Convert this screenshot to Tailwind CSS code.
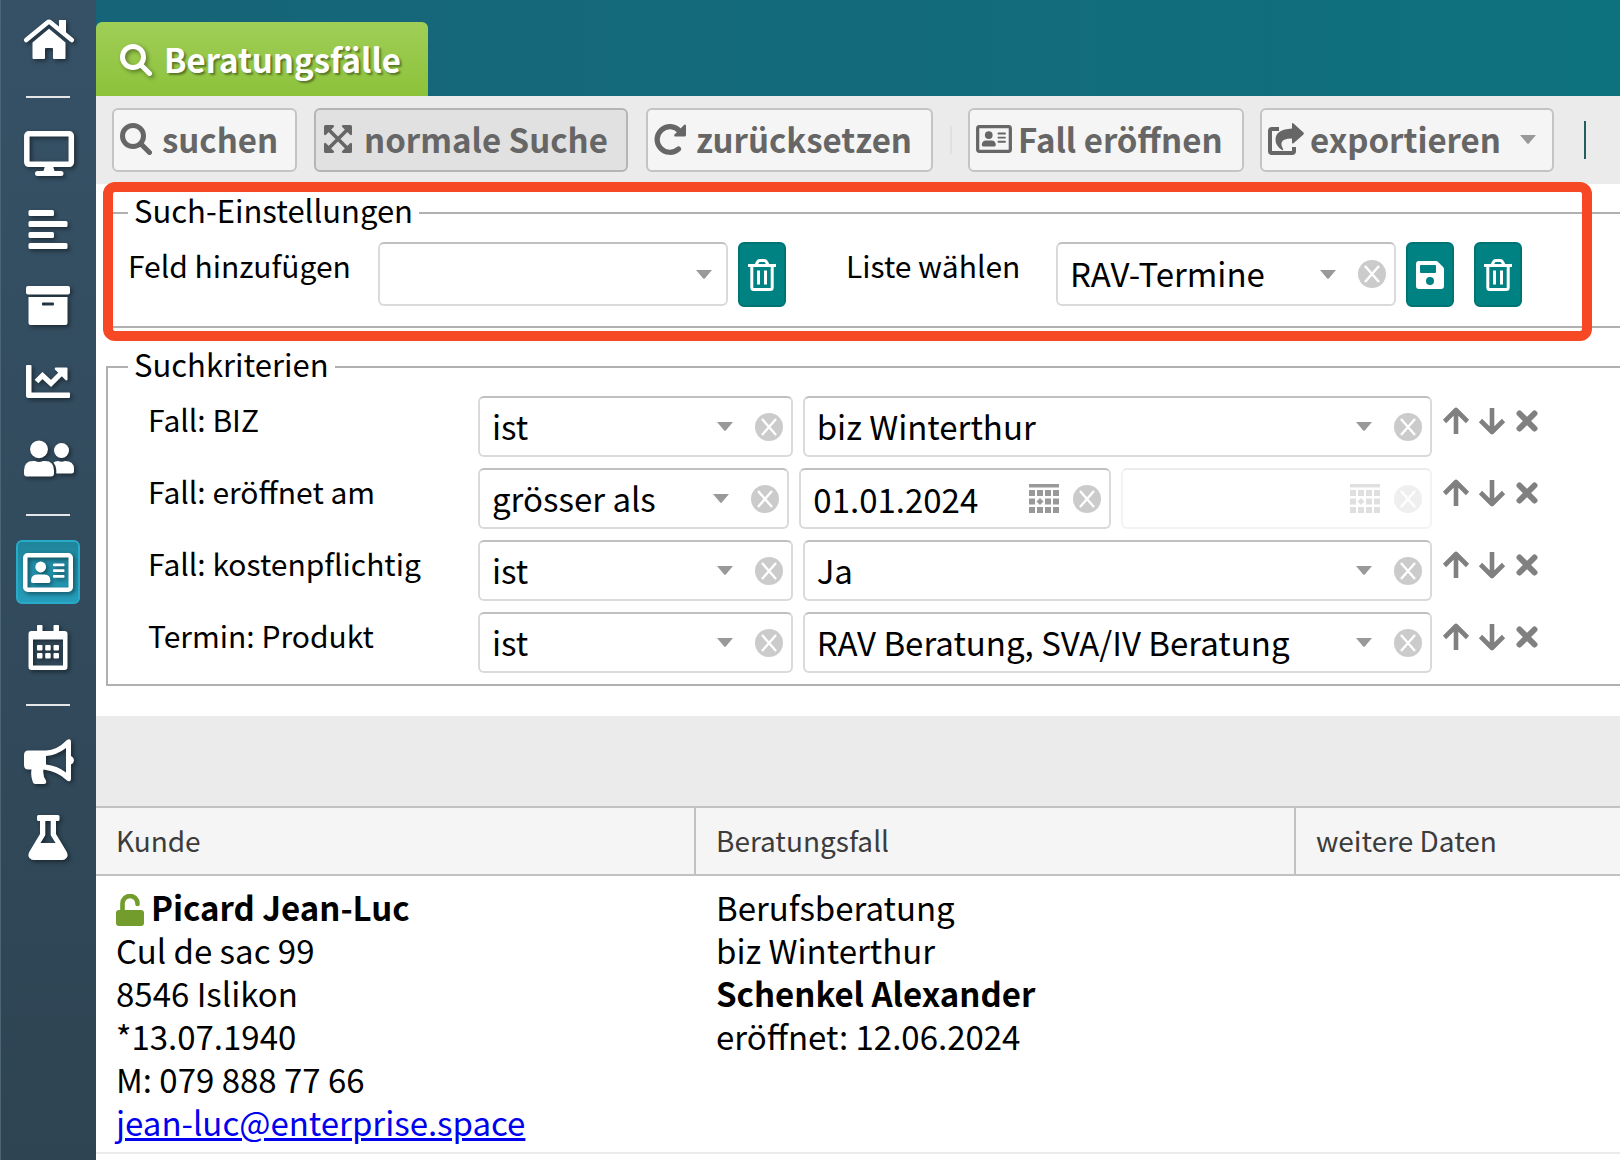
<!DOCTYPE html>
<html lang="de">
<head>
<meta charset="utf-8">
<meta name="viewport" content="width=device-width, initial-scale=1">
<title>Beratungsfälle</title>
<script src="https://cdn.jsdelivr.net/npm/@tailwindcss/browser@4"></script>
</head>
<body class="min-h-screen overflow-x-hidden bg-white font-['Noto_Sans_CJK_SC','Noto_Sans',sans-serif] text-black">

<svg class="hidden" aria-hidden="true">
  <symbol id="search" viewBox="0 0 32 32"><circle cx="13" cy="13" r="10.500" fill="none" stroke="currentColor" stroke-width="5"/><path d="M20.500 20.500L29.500 29.500" stroke="currentColor" stroke-width="5" stroke-linecap="round"/></symbol>
  <symbol id="caret" viewBox="0 0 16 9"><path d="M0 0H16L8.800 8.400Q8 9 7.200 8.400Z" fill="#999"/></symbol>
  <symbol id="clear" viewBox="0 0 28 28"><circle cx="14" cy="14" r="14" fill="#cbcbcb"/><path d="M7 6L21 22M21 6L7 22" stroke="#fff" stroke-width="2.400"/></symbol>
  <symbol id="trash" viewBox="0 0 28 32"><g fill="none" stroke="currentColor" stroke-width="3"><path d="M0 6.500H28"/><path d="M3.800 7V28.500Q3.800 30.500 5.800 30.500H22.200Q24.200 30.500 24.200 28.500V7"/><path d="M8 6L9.500 3Q10.200 1.500 12 1.500H16Q17.800 1.500 18.500 3L20 6"/><path d="M10.500 11.500V25.500M17.500 11.500V25.500"/></g></symbol>
  <symbol id="save" viewBox="0 0 28 28"><path fill="currentColor" fill-rule="evenodd" d="M3 0H20Q21.200 0 22.100 .9L27.100 5.900Q28 6.800 28 8V25Q28 28 25 28H3Q0 28 0 25V3Q0 0 3 0ZM5 4Q4 4 4 5V11Q4 12 5 12H19Q20 12 20 11V5Q20 4 19 4ZM14 16A4 4 0 1 0 14 24A4 4 0 1 0 14 16Z"/></symbol>
  <symbol id="cal-grid" viewBox="0 0 30 29"><g fill="#999"><path d="M0 0H30V3.500H0Z"/><path d="M0 6H6V12H0ZM8 6H14V12H8ZM16 6H22V12H16ZM24 6H30V12H24ZM0 14.500H6V20.500H0ZM16 14.500H22V20.500H16ZM24 14.500H30V20.500H24ZM0 23H6V29H0ZM8 23H14V29H8ZM16 23H22V29H16ZM24 23H30V29H24ZM11 14L14.500 17.500L11 21L7.500 17.500Z"/></g></symbol>
  <symbol id="up" viewBox="0 0 28 28"><path d="M14 27V3M2.500 14.500L14 3L25.500 14.500" fill="none" stroke="currentColor" stroke-width="4.600" stroke-linejoin="round"/></symbol>
  <symbol id="down" viewBox="0 0 28 28"><path d="M14 1V25M2.500 13.500L14 25L25.500 13.500" fill="none" stroke="currentColor" stroke-width="4.600" stroke-linejoin="round"/></symbol>
  <symbol id="times" viewBox="0 0 22 22"><path d="M3.500 3.500L18.500 18.500M18.500 3.500L3.500 18.500" stroke="currentColor" stroke-width="6" stroke-linecap="round"/></symbol>
  <symbol id="card" viewBox="0 0 50 39"><rect x="2.250" y="2.250" width="45.500" height="34.500" rx="2.500" fill="none" stroke="currentColor" stroke-width="4.500"/><g fill="currentColor"><circle cx="17.700" cy="14" r="5.400"/><path d="M8 28Q8 21.500 14 21.500H21.500Q27.500 21.500 27.500 28Q27.500 30 25.500 30H10Q8 30 8 28Z"/><rect x="30" y="10.500" width="11.500" height="2.700" rx="1"/><rect x="30" y="16.200" width="11.500" height="2.700" rx="1"/><rect x="30" y="22" width="11.500" height="2.700" rx="1"/></g></symbol>
</svg>

<div class="flex min-h-screen">
  <nav aria-label="Hauptnavigation" class="flex w-24 shrink-0 flex-col items-center bg-linear-to-b from-[#365166] to-[#2e4453] pt-0.5 text-white shadow-[inset_1px_0_0_#4b6577]">
    <a href="#" aria-label="Start" class="my-1.5 block size-16"><svg viewBox="0 0 64 64" class="size-16 drop-shadow-[2px_2px_2px_rgba(0,0,0,0.45)]"><path d="M43 12.500Q43 12 43.500 12H49.500Q50 12 50 12.500V27L43 21Z" fill="currentColor"/><path d="M10.200 32L31.500 14.500Q33 13.300 34.500 14.500L55.800 32" fill="none" stroke="currentColor" stroke-width="4.600" stroke-linecap="round"/><path fill="currentColor" d="M33 20.800L49.500 34.500V50Q49.500 51 48.500 51H38Q37 51 37 50V41Q37 40 36 40H30Q29 40 29 41V50Q29 51 28 51H17.500Q16.500 51 16.500 50V34.500Z"/></svg></a>
    <div class="flex h-[38px] w-11 items-center"><hr class="w-full border-t-2 border-[#e4e6e8]"></div>
    <a href="#" aria-label="Arbeitsplatz" class="my-1.5 block size-16"><svg viewBox="0 0 64 64" class="size-16 drop-shadow-[2px_2px_2px_rgba(0,0,0,0.45)]"><rect x="10.800" y="11.800" width="44.500" height="30.500" rx="2" fill="none" stroke="currentColor" stroke-width="5.500"/><path fill="currentColor" d="M29 44H37L38.500 49H45Q47.500 49 47.500 51.500T45 54H21.500Q19 54 19 51.500T21.500 49H27.500Z"/></svg></a>
    <a href="#" aria-label="Liste" class="my-1.5 block size-16"><svg viewBox="0 0 64 64" class="size-16 drop-shadow-[2px_2px_2px_rgba(0,0,0,0.45)]"><g fill="currentColor"><rect x="12.500" y="12" width="25.500" height="6" rx="1.500"/><rect x="12.500" y="23" width="39" height="6" rx="1.500"/><rect x="12.500" y="34" width="25.500" height="6" rx="1.500"/><rect x="12.500" y="45" width="39" height="6" rx="1.500"/></g></svg></a>
    <a href="#" aria-label="Archiv" class="my-1.5 block size-16"><svg viewBox="0 0 64 64" class="size-16 drop-shadow-[2px_2px_2px_rgba(0,0,0,0.45)]"><rect x="10" y="12" width="44" height="8.500" rx="2" fill="currentColor"/><path fill="currentColor" fill-rule="evenodd" d="M12.500 23H51.500V49Q51.500 51 49.500 51H14.500Q12.500 51 12.500 49ZM27 28.500Q26 28.500 26 29.500V30.500Q26 31.500 27 31.500H37Q38 31.500 38 30.500V29.500Q38 28.500 37 28.500Z"/></svg></a>
    <a href="#" aria-label="Statistik" class="my-1.5 block size-16"><svg viewBox="0 0 64 64" class="size-16 drop-shadow-[2px_2px_2px_rgba(0,0,0,0.45)]"><path fill="currentColor" d="M11 15H14.500Q15.500 15 15.500 16V42.500H53Q54 42.500 54 43.500V47Q54 48 53 48H12.500Q10 48 10 45.500V16Q10 15 11 15Z"/><path d="M20.500 31.500L26.500 25.500L35 33.500L46.500 22" fill="none" stroke="currentColor" stroke-width="5.200"/><path fill="currentColor" d="M39.500 17.500H50.500Q51.500 17.500 51.500 18.500V29.500Q51 31 49.500 30L39 19.500Q38 18 39.500 17.500Z"/></svg></a>
    <a href="#" aria-label="Personen" class="my-1.5 block size-16"><svg viewBox="0 0 64 64" class="size-16 drop-shadow-[2px_2px_2px_rgba(0,0,0,0.45)]"><g fill="currentColor"><circle cx="23" cy="23.300" r="8.900"/><circle cx="45.500" cy="24.500" r="7.500"/><path d="M8 44.500Q8 35 17 35H19Q23 37 27 35H29Q38 35 38 44.500V47.500Q38 50.500 35 50.500H11Q8 50.500 8 47.500Z"/><path d="M37.500 36.500Q39 35 42 35Q45.500 36.500 49 35Q58 35 58 43V45Q58 47.500 55.500 47.500H40.300V44Q40.300 40 37.500 36.500Z"/></g></svg></a>
    <div class="flex h-[38px] w-11 items-center"><hr class="w-full border-t-2 border-[#e4e6e8]"></div>
    <a href="#" aria-label="Beratungsfälle" aria-current="page" class="my-1.5 flex size-16 items-center justify-center rounded-md border-2 border-[#27abc9] bg-linear-to-b from-[#1f859b] to-[#259dba]"><svg class="h-[39px] w-[50px] drop-shadow-[2px_2px_2px_rgba(0,0,0,0.45)]"><use href="#card"/></svg></a>
    <a href="#" aria-label="Kalender" class="my-1.5 block size-16"><svg viewBox="0 0 64 64" class="size-16 drop-shadow-[2px_2px_2px_rgba(0,0,0,0.45)]"><path fill="currentColor" fill-rule="evenodd" d="M21 10Q21 9 22 9H25.500Q26.500 9 26.500 10V15H37.500V10Q37.500 9 38.500 9H42Q43 9 43 10V15H48.500Q51.500 15 51.500 18V51Q51.500 54 48.500 54H15.500Q12.500 54 12.500 51V18Q12.500 15 15.500 15H21ZM17 23.500V49.500H47V23.500Z"/><g fill="currentColor"><rect x="21" y="29" width="5.500" height="5.500" rx="1"/><rect x="29.200" y="29" width="5.500" height="5.500" rx="1"/><rect x="37.500" y="29" width="5.500" height="5.500" rx="1"/><rect x="21" y="37" width="5.500" height="5.500" rx="1"/><rect x="29.200" y="37" width="5.500" height="5.500" rx="1"/><rect x="37.500" y="37" width="5.500" height="5.500" rx="1"/></g></svg></a>
    <div class="flex h-[38px] w-11 items-center"><hr class="w-full border-t-2 border-[#e4e6e8]"></div>
    <a href="#" aria-label="Mitteilungen" class="my-1.5 block size-16"><svg viewBox="0 0 64 64" class="size-16 drop-shadow-[2px_2px_2px_rgba(0,0,0,0.45)]"><path fill="currentColor" fill-rule="evenodd" d="M12.500 20.500H30Q40.500 20.500 51 10Q52 9 53.500 9.200Q55 9.500 55 12V26Q58 27.500 58 30.300T55 34.500V48.500Q55 51 53.500 51.200Q52 51.500 51 50.500Q42 41.500 27.500 39.500Q26.500 46 30 50.500Q31 54 28 54H19.500Q17 54 16.500 51Q14.500 45.500 15.500 39.500H12.500Q8 39.500 8 35V25Q8 20.500 12.500 20.500ZM30 26V34.500Q41 35.500 50 42.500V18Q41 25 30 26Z"/></svg></a>
    <a href="#" aria-label="Labor" class="my-1.5 block size-16"><svg viewBox="0 0 64 64" class="size-16 drop-shadow-[2px_2px_2px_rgba(0,0,0,0.45)]"><path fill="currentColor" fill-rule="evenodd" d="M22.500 9H42Q43.500 9 43.500 10.500V13.500Q43.500 15 42 15H40V28L50.500 45.500Q53 50 50 52.500Q48.500 54 46 54H18Q15.500 54 14 52.500Q11 50 13.500 45.500L24 28V15H22.500Q21 15 21 13.500V10.500Q21 9 22.500 9ZM29.300 15V28.500Q29.300 29.500 28.500 30.500L24.500 37H39.500L35.500 30.500Q34.700 29.500 34.700 28.500V15Z"/></svg></a>
  </nav>

  <main class="min-w-0 flex-1">
    <header class="flex h-24 items-end bg-linear-to-r from-[#166477] to-[#0e717e]">
      <h1 class="flex h-[74px] w-[332px] items-center rounded-t-md bg-linear-to-b from-[#a0ce56] to-[#8cc23a] pl-6 text-white">
        <svg class="mt-0.5 mr-3 size-8 drop-shadow-[2px_2px_2px_rgba(0,0,0,0.4)]"><use href="#search"/></svg>
        <span class="text-[33px] leading-[48px] font-bold whitespace-nowrap text-shadow-[2px_2px_2px_rgba(0,0,0,0.4)]">Beratungsfälle</span>
      </h1>
    </header>

    <div role="toolbar" aria-label="Aktionen" class="flex h-[88px] items-center bg-[#ebebeb] pl-4 text-[33px] leading-[60px] font-bold whitespace-nowrap text-[#666]">
      <button type="button" class="mr-[17px] flex h-16 w-[185px] shrink-0 items-center rounded-md border-2 border-[#c4c4c4] bg-[#f5f5f5] pb-0.5 pl-1.5"><svg class="mr-2.5 size-8"><use href="#search"/></svg>suchen</button>
      <button type="button" aria-pressed="true" class="mr-[18px] flex h-16 w-[314px] shrink-0 items-center rounded-md border-2 border-[#b5b5b5] bg-[#e1e1e1] pb-0.5 pl-2"><svg viewBox="0 0 28 28" class="mr-3 size-7"><path d="M5 5L23 23M23 5L5 23" stroke="currentColor" stroke-width="3.600"/><path fill="currentColor" d="M1.500 0H9Q11 .5 9.800 2L2 9.800Q.5 11 0 9V1.500Q0 0 1.500 0ZM26.500 0H19Q17 .5 18.200 2L26 9.800Q27.500 11 28 9V1.500Q28 0 26.500 0ZM1.500 28H9Q11 27.500 9.800 26L2 18.200Q.5 17 0 19V26.500Q0 28 1.500 28ZM26.500 28H19Q17 27.500 18.200 26L26 18.200Q27.500 17 28 19V26.500Q28 28 26.500 28Z"/></svg>normale Suche</button>
      <button type="button" class="flex h-16 w-[287px] shrink-0 items-center rounded-md border-2 border-[#c4c4c4] bg-[#f5f5f5] pb-0.5 pl-1.5"><svg viewBox="0 0 32 32" class="mr-2.5 size-8"><path d="M25.500 8A12.800 12.800 0 1 0 24.500 26" fill="none" stroke="currentColor" stroke-width="5.200" stroke-linecap="round"/><path fill="currentColor" d="M30.500 1.500Q32 1 32 3V12Q32 13.500 30.500 13.500H21.500Q19.500 13.500 20.500 11.500Z"/></svg>zurücksetzen</button>
      <div class="mr-4 ml-[17px] h-7 w-0.5 shrink-0 bg-[#e0e0e0]"></div>
      <button type="button" class="mr-4 flex h-16 w-[276px] shrink-0 items-center rounded-md border-2 border-[#c4c4c4] bg-[#f5f5f5] pb-0.5 pl-1.5"><svg class="mr-1.5 h-7 w-9"><use href="#card"/></svg>Fall eröffnen</button>
      <button type="button" aria-haspopup="menu" class="flex h-16 w-[294px] shrink-0 items-center rounded-md border-2 border-[#c4c4c4] bg-[#f5f5f5] pr-4 pb-0.5 pl-1.5"><svg viewBox="0 0 36 32" class="mr-1.5 h-8 w-9"><path d="M11 6H4Q2 6 2 8V28Q2 30 4 30H24Q26 30 26 28V24" fill="none" stroke="currentColor" stroke-width="4"/><path fill="currentColor" d="M24 1Q24-.5 25.500 .5L35.200 9.300Q36.500 10.500 35.200 11.700L25.500 20.300Q24 21 24 19.500V15.500Q14 15.500 13.500 20Q13 22.500 15 26Q15.500 27.500 14 27Q7.500 23 7.500 16.500Q7.500 6.500 24 5.500Z"/></svg>exportieren<svg class="ml-auto h-[9px] w-4"><use href="#caret"/></svg></button>
      <div class="ml-[30px] h-[38px] w-0.5 shrink-0 bg-[#245c60]"></div>
    </div>

    <form class="pt-3 pb-[30px] pl-2.5 text-[30px]">
      <div class="relative">
        <fieldset class="border-2 border-r-0 border-[#b0b0b0] pt-3 pb-[19px] pl-5">
          <legend class="px-1.5 pb-1.5 text-[31px] leading-7">Such-Einstellungen</legend>
          <div class="flex items-start">
            <label for="feld" class="w-[250px] shrink-0 leading-[46px]">Feld hinzufügen</label>
            <div class="flex h-16 w-[350px] shrink-0 items-center rounded-md border-2 border-[#dadada] border-t-[#c0c0c0] pr-3.5">
              <select id="feld" class="h-full min-w-0 flex-1 appearance-none pl-3 text-[33px] outline-none"><option></option></select>
              <svg class="h-[9px] w-4 shrink-0"><use href="#caret"/></svg>
            </div>
            <button type="button" aria-label="Feld löschen" class="mr-[60px] ml-2.5 flex h-[65px] w-12 shrink-0 items-center justify-center rounded-md border-2 border-[#007474] bg-[#008282] text-white"><svg class="h-8 w-7"><use href="#trash"/></svg></button>
            <label for="liste" class="w-[210px] shrink-0 leading-[46px]">Liste wählen</label>
            <div class="flex h-16 w-[340px] shrink-0 items-center rounded-md border-2 border-[#dadada] border-t-[#c0c0c0] pr-2">
              <select id="liste" class="h-full min-w-0 flex-1 appearance-none pl-3 text-[33px] outline-none"><option>RAV-Termine</option></select>
              <svg class="mr-[22px] h-[9px] w-4 shrink-0"><use href="#caret"/></svg>
              <button type="button" aria-label="Auswahl leeren" class="size-7 shrink-0"><svg class="size-7"><use href="#clear"/></svg></button>
            </div>
            <button type="button" aria-label="Liste speichern" class="mr-5 ml-2.5 flex h-[65px] w-12 shrink-0 items-center justify-center rounded-md border-2 border-[#007474] bg-[#008282] text-white"><svg class="size-7"><use href="#save"/></svg></button>
            <button type="button" aria-label="Liste löschen" class="flex h-[65px] w-12 shrink-0 items-center justify-center rounded-md border-2 border-[#007474] bg-[#008282] text-white"><svg class="h-8 w-7"><use href="#trash"/></svg></button>
          </div>
        </fieldset>
        <div class="pointer-events-none absolute -top-3.5 right-7 -bottom-[13px] -left-[3px] rounded-xl border-10 border-[#f64824]"></div>
      </div>

      <fieldset class="mt-[22px] border-2 border-r-0 border-[#b0b0b0] pt-3 pb-[11px] pl-5">
        <legend class="px-1.5 pb-1.5 text-[31px] leading-7">Suchkriterien</legend>
        <div class="flex flex-col gap-[11px] pr-[82px] pl-5">

          <div class="flex items-start">
            <label for="k1" class="w-[330px] shrink-0 leading-[46px]">Fall: BIZ</label>
            <div class="grid min-w-0 flex-1 grid-cols-[1fr_2fr] gap-2.5">
              <div class="flex h-[61px] items-center rounded-md border-2 border-[#dadada] border-t-[#c0c0c0] pr-2"><select id="k1" class="h-full min-w-0 flex-1 appearance-none pl-3 text-[33px] outline-none"><option>ist</option></select><svg class="mr-[22px] h-[9px] w-4 shrink-0"><use href="#caret"/></svg><button type="button" aria-label="leeren" class="size-7 shrink-0"><svg class="size-7"><use href="#clear"/></svg></button></div>
              <div class="flex h-[61px] items-center rounded-md border-2 border-[#dadada] border-t-[#c0c0c0] pr-2"><select aria-label="BIZ" class="h-full min-w-0 flex-1 appearance-none pl-3 text-[33px] outline-none"><option>biz Winterthur</option></select><svg class="mr-[22px] h-[9px] w-4 shrink-0"><use href="#caret"/></svg><button type="button" aria-label="leeren" class="size-7 shrink-0"><svg class="size-7"><use href="#clear"/></svg></button></div>
            </div>
            <div class="ml-2.5 flex h-[50px] w-24 shrink-0 items-center gap-2 text-[#808080]"><button type="button" aria-label="nach oben"><svg class="size-7"><use href="#up"/></svg></button><button type="button" aria-label="nach unten"><svg class="size-7"><use href="#down"/></svg></button><button type="button" aria-label="entfernen" class="ml-0.5"><svg class="size-[22px]"><use href="#times"/></svg></button></div>
          </div>

          <div class="flex items-start">
            <label for="k2" class="w-[330px] shrink-0 leading-[46px]">Fall: eröffnet am</label>
            <div class="grid min-w-0 flex-1 grid-cols-3 gap-2.5">
              <div class="flex h-[61px] items-center rounded-md border-2 border-[#dadada] border-t-[#c0c0c0] pr-2"><select id="k2" class="h-full min-w-0 flex-1 appearance-none pl-3 text-[33px] outline-none"><option>grösser als</option></select><svg class="mr-[22px] h-[9px] w-4 shrink-0"><use href="#caret"/></svg><button type="button" aria-label="leeren" class="size-7 shrink-0"><svg class="size-7"><use href="#clear"/></svg></button></div>
              <div class="flex h-[61px] items-center rounded-md border-2 border-[#dadada] border-t-[#c0c0c0] pr-2"><input type="text" aria-label="Datum von" value="01.01.2024" class="h-full min-w-0 flex-1 pl-3 text-[33px] outline-none"><button type="button" aria-label="Kalender öffnen" class="mr-3.5 shrink-0"><svg class="h-[29px] w-[30px]"><use href="#cal-grid"/></svg></button><button type="button" aria-label="leeren" class="size-7 shrink-0"><svg class="size-7"><use href="#clear"/></svg></button></div>
              <div class="flex h-[61px] items-center rounded-md border-2 border-[#dadada] border-t-[#c0c0c0] pr-2 opacity-30"><input type="text" aria-label="Datum bis" disabled class="h-full min-w-0 flex-1 pl-3 text-[33px] outline-none"><button type="button" disabled aria-label="Kalender öffnen" class="mr-3.5 shrink-0"><svg class="h-[29px] w-[30px]"><use href="#cal-grid"/></svg></button><button type="button" disabled aria-label="leeren" class="size-7 shrink-0"><svg class="size-7"><use href="#clear"/></svg></button></div>
            </div>
            <div class="ml-2.5 flex h-[50px] w-24 shrink-0 items-center gap-2 text-[#808080]"><button type="button" aria-label="nach oben"><svg class="size-7"><use href="#up"/></svg></button><button type="button" aria-label="nach unten"><svg class="size-7"><use href="#down"/></svg></button><button type="button" aria-label="entfernen" class="ml-0.5"><svg class="size-[22px]"><use href="#times"/></svg></button></div>
          </div>

          <div class="flex items-start">
            <label for="k3" class="w-[330px] shrink-0 leading-[46px]">Fall: kostenpflichtig</label>
            <div class="grid min-w-0 flex-1 grid-cols-[1fr_2fr] gap-2.5">
              <div class="flex h-[61px] items-center rounded-md border-2 border-[#dadada] border-t-[#c0c0c0] pr-2"><select id="k3" class="h-full min-w-0 flex-1 appearance-none pl-3 text-[33px] outline-none"><option>ist</option></select><svg class="mr-[22px] h-[9px] w-4 shrink-0"><use href="#caret"/></svg><button type="button" aria-label="leeren" class="size-7 shrink-0"><svg class="size-7"><use href="#clear"/></svg></button></div>
              <div class="flex h-[61px] items-center rounded-md border-2 border-[#dadada] border-t-[#c0c0c0] pr-2"><select aria-label="kostenpflichtig" class="h-full min-w-0 flex-1 appearance-none pl-3 text-[33px] outline-none"><option>Ja</option></select><svg class="mr-[22px] h-[9px] w-4 shrink-0"><use href="#caret"/></svg><button type="button" aria-label="leeren" class="size-7 shrink-0"><svg class="size-7"><use href="#clear"/></svg></button></div>
            </div>
            <div class="ml-2.5 flex h-[50px] w-24 shrink-0 items-center gap-2 text-[#808080]"><button type="button" aria-label="nach oben"><svg class="size-7"><use href="#up"/></svg></button><button type="button" aria-label="nach unten"><svg class="size-7"><use href="#down"/></svg></button><button type="button" aria-label="entfernen" class="ml-0.5"><svg class="size-[22px]"><use href="#times"/></svg></button></div>
          </div>

          <div class="flex items-start">
            <label for="k4" class="w-[330px] shrink-0 leading-[46px]">Termin: Produkt</label>
            <div class="grid min-w-0 flex-1 grid-cols-[1fr_2fr] gap-2.5">
              <div class="flex h-[61px] items-center rounded-md border-2 border-[#dadada] border-t-[#c0c0c0] pr-2"><select id="k4" class="h-full min-w-0 flex-1 appearance-none pl-3 text-[33px] outline-none"><option>ist</option></select><svg class="mr-[22px] h-[9px] w-4 shrink-0"><use href="#caret"/></svg><button type="button" aria-label="leeren" class="size-7 shrink-0"><svg class="size-7"><use href="#clear"/></svg></button></div>
              <div class="flex h-[61px] items-center rounded-md border-2 border-[#dadada] border-t-[#c0c0c0] pr-2"><select aria-label="Produkt" class="h-full min-w-0 flex-1 appearance-none pl-3 text-[33px] outline-none"><option>RAV Beratung, SVA/IV Beratung</option></select><svg class="mr-[22px] h-[9px] w-4 shrink-0"><use href="#caret"/></svg><button type="button" aria-label="leeren" class="size-7 shrink-0"><svg class="size-7"><use href="#clear"/></svg></button></div>
            </div>
            <div class="ml-2.5 flex h-[50px] w-24 shrink-0 items-center gap-2 text-[#808080]"><button type="button" aria-label="nach oben"><svg class="size-7"><use href="#up"/></svg></button><button type="button" aria-label="nach unten"><svg class="size-7"><use href="#down"/></svg></button><button type="button" aria-label="entfernen" class="ml-0.5"><svg class="size-[22px]"><use href="#times"/></svg></button></div>
          </div>
        </div>
      </fieldset>
    </form>

    <div class="h-[90px] bg-[#ebebeb]"></div>

    <table class="w-full table-fixed border-separate border-spacing-0 text-left">
      <colgroup><col class="w-[600px]"><col class="w-[600px]"><col></colgroup>
      <thead class="bg-[#f5f5f5] text-[28px] leading-[64px] text-[#3c3c3c]">
        <tr>
          <th scope="col" class="border-y-2 border-r-2 border-[#c2c2c2] pt-0 pb-0.5 pl-5 font-normal">Kunde</th>
          <th scope="col" class="border-y-2 border-r-2 border-[#c2c2c2] pt-0 pb-0.5 pl-5 font-normal">Beratungsfall</th>
          <th scope="col" class="border-y-2 border-[#c2c2c2] pt-0 pb-0.5 pl-5 font-normal">weitere Daten</th>
        </tr>
      </thead>
      <tbody class="align-top text-[33px] leading-[43px]">
        <tr>
          <td class="border-b-2 border-[#ebebeb] pt-2.5 pb-2 pl-5">
            <div class="flex items-center font-bold"><svg viewBox="0 0 28 32" class="mt-1 mr-[7px] h-8 w-7 text-[#729c2c]"><rect y="16" width="28" height="16" rx="3" fill="currentColor"/><path d="M6.500 17V9.500A7.500 7.500 0 0 1 21.500 9.500V10" fill="none" stroke="currentColor" stroke-width="4.600" stroke-linecap="round"/></svg>Picard Jean-Luc</div>
            <div>Cul de sac 99</div>
            <div>8546 Islikon</div>
            <div>*13.07.1940</div>
            <div>M: 079 888 77 66</div>
            <div><a href="mailto:jean-luc@enterprise.space" class="text-[#0000ee] underline">jean-luc@enterprise.space</a></div>
          </td>
          <td class="border-b-2 border-[#ebebeb] pt-2.5 pb-2 pl-5">
            <div>Berufsberatung</div>
            <div>biz Winterthur</div>
            <div class="font-bold">Schenkel Alexander</div>
            <div>eröffnet: 12.06.2024</div>
          </td>
          <td class="border-b-2 border-[#ebebeb] pt-2.5 pb-2 pl-5"></td>
        </tr>
      </tbody>
    </table>
  </main>
</div>
</body>
</html>
